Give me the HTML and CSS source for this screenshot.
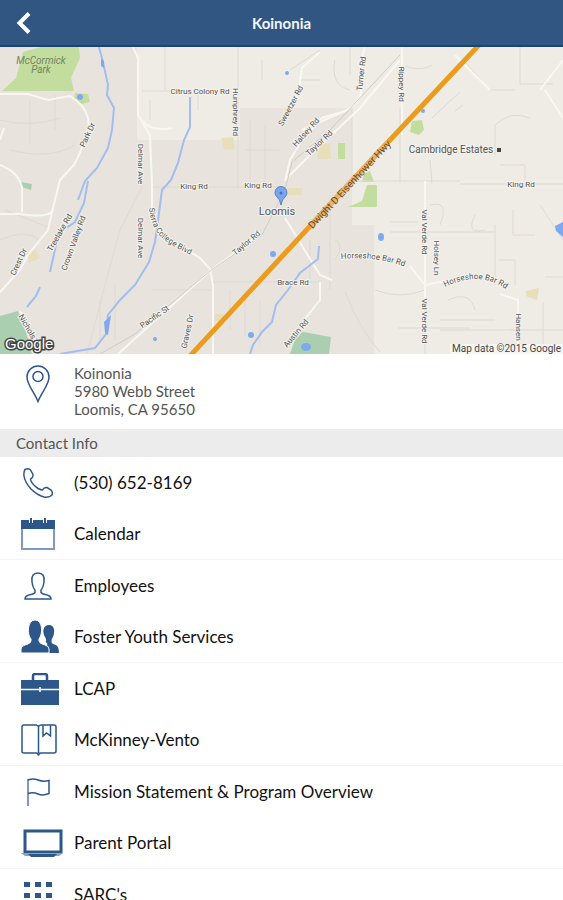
FILE: index.html
```
<!DOCTYPE html>
<html lang="en">
<head>
    <meta charset="UTF-8">
    <meta name="viewport" content="width=device-width, initial-scale=1.0">
    <title>Koinonia</title>
    <link rel="stylesheet" href="styles.css">
</head>
<body>

    <header class="topbar">
        <button class="back" aria-label="Back">
            <svg width="16" height="24" viewBox="0 0 16 24"><path d="M13 2.500 L3.500 12 L13 21.500" fill="none" stroke="#fff" stroke-width="4"/></svg>
        </button>
        <h1>Koinonia</h1>
    </header>

    <main>
        <div class="map">
            <svg viewBox="0 47 563 307" preserveAspectRatio="xMidYMid slice">
                <!-- land -->
                <rect x="0" y="47" width="563" height="307" fill="#efece5"/>
                <path d="M0 47H137V140H240V108H352V225H374V354H0Z" fill="#e8e4dd"/>
                <path d="M137 47H285V108H240V140H152L140 120Z" fill="#efece5"/>

                <!-- parks, schools -->
                <g fill="#c3dd9f">
                    <path d="M23 52L41 47H79L80 58L71 78L74 91H2L16 78Z"/>
                    <path d="M75 93L88 94L90 102L82 104L74 99Z"/>
                    <path d="M412 121L422 120L424 130L419 135L410 132Z"/>
                    <rect x="338" y="143" width="7" height="16"/>
                    <path d="M364 174L370 171L374 182L362 182Z"/>
                    <path d="M367 185H377V207H348L362 201Z"/>
                </g>
                <g fill="#a9cfb0">
                    <path d="M0 316L18 311L24 325L32 354H0Z"/>
                    <path d="M298 331L331 337L329 354H290Z"/>
                    <path d="M21 182L32 184L31 190L21 187Z"/>
                </g>
                <g fill="#e8dfba">
                    <path d="M221 138L233 137L235 149L224 150Z"/>
                    <path d="M319 144L330 143L331 159L317 159Z"/>
                    <path d="M27 252L36 250L40 258L29 263Z"/>
                    <path d="M288 188H302V195H288Z"/>
                    <path d="M526 291L539 288L537 300L526 296Z"/>
                    <path d="M215 314H223V321H215Z"/>
                </g>

                <!-- minor roads -->
                <g class="lane">
                    <path d="M165 47V90M142 91H170M238 47V188M352 108V180M350 47V75M520 47V84M520 84H553M400 108V183"/>
                    <path d="M152 187H280M345 181H460M460 184H563M425 181V354M213 282H320M152 290H213M495 225V285M390 232H495M390 222H418"/>
                    <path d="M142 187L120 230L105 285L87 354M100 300V340M115 285V340M230 290V330M245 290V335M260 300V345"/>
                    <path d="M455 111L463 105M432 118L460 92M465 62L490 90H515M495 155V125Q510 110 530 118M430 160L432 183M500 165H525V180"/>
                    <path d="M430 205Q450 200 440 225M475 215Q465 235 485 230M513 210V235H535M498 260H515V285M448 300Q470 290 475 310M440 320H495M440 330H520M398 328H470"/>
                    <path d="M290 70L320 50M335 60Q330 85 350 90M405 66Q420 72 432 65M300 90V80H320M543 302V354M545 277H563M510 330H563M540 205L563 240"/>
                    <path d="M5 210Q30 220 50 228M0 240Q25 228 40 240M0 120Q30 128 60 118M10 150Q50 160 75 145M55 95V130M30 100V145M150 100V120M198 90V110M262 60V80"/>
                    <path d="M250 120V180M265 125V180M245 150H280M310 240V280M330 210V290M335 240Q345 245 335 260M345 292Q360 330 380 352M375 290Q400 300 425 290"/>
                </g>
                <g class="road">
                    <path d="M0 140L4 128M0 94H28L48 100L70 96Q85 105 88 118L89 128Q82 150 74 165L60 180L52 212Q45 218 20 214H0"/>
                    <path d="M52 212L48 230L28 255L20 270L0 292M0 165Q18 172 22 187L22 212M20 311L35 340L50 350"/>
                    <path d="M133 47L138 58V115L150 135L152 185V215Q155 235 175 243L200 258L210 269L213 285V354"/>
                    <path d="M142 120Q148 130 165 129L172 128M118 354L210 271L255 238M285 181L290 160L302 140L322 118L345 111M285 180L310 155L360 108L400 60"/>
                    <path d="M402 47V135M425 181V300M285 218L320 275L332 280M320 282V300L300 325M410 266L425 285L450 280M500 294L518 300V354"/>
                    <path d="M365 47Q358 70 360 85Q365 100 345 111L302 130M320 52L302 68L298 95L282 122M455 55L490 90M540 90L563 60M545 90L563 118"/>
                </g>
                <path d="M100 354L135 334L210 271L262 235L285 190L292 162L330 130L400 55" fill="none" stroke="#cfcbc5" stroke-width="1"/>

                <!-- water -->
                <g class="creek">
                    <path d="M99 47L103 62L108 85L107 95L114 108L112 130L108 148L97 168L85 181L78 200M88 181L84 203L75 222L60 232L56 245L50 272"/>
                    <path d="M190 97V127L184 140L178 163L171 180L162 190L157 228L155 242L149 262L135 285L120 300L108 315L106 334L95 348L60 354"/>
                    <path d="M40 287L36 296L27 307M319 246L318 259L300 273L288 290L276 305L272 322L262 332L253 345L250 354"/>
                </g>
                <g fill="#7fa9ee">
                    <path d="M104 322L111 315L108 335L105 333Z"/>
                    <path d="M555 226L563 222V237L556 231Z"/>
                    <ellipse cx="381" cy="237" rx="3" ry="4"/>
                    <circle cx="273" cy="254" r="3"/>
                    <circle cx="251" cy="335" r="3"/>
                    <circle cx="80" cy="97" r="3"/>
                    <circle cx="287" cy="73" r="2"/>
                    <circle cx="423" cy="111" r="2"/>
                    <circle cx="155" cy="339" r="2"/>
                    <ellipse cx="306" cy="347" rx="5" ry="4"/>
                    <path d="M101 59L104 61L104 68L101 66Z"/>
                </g>

                <!-- freeway -->
                <path d="M190 356L337 197L390 140L479 45" fill="none" stroke="#eb9c1d" stroke-width="5"/>
                <path d="M310 227L337 197L388 142" fill="none" stroke="#e8b26a" stroke-width="5"/>

                <!-- labels -->
                <defs>
                    <path id="sierra" d="M149 208Q152 232 166 241Q180 251 205 261"/>
                    <path id="horseshoe1" d="M341 259Q385 255 418 273"/>
                    <path id="horseshoe2" d="M445 287Q487 266 518 300"/>
                </defs>
                <g class="label">
                    <g class="park"><text x="41" y="64">McCormick</text><text x="41" y="73">Park</text></g>
                    <text x="200" y="94">Citrus Colony Rd</text>
                    <text transform="translate(233 112) rotate(90)">Humphrey Rd</text>
                    <text transform="translate(90 136) rotate(-65)">Park Dr</text>
                    <text transform="translate(138 164) rotate(90)">Delmar Ave</text>
                    <text transform="translate(138 238) rotate(90)">Delmar Ave</text>
                    <text x="194" y="189">King Rd</text>
                    <text x="258" y="188">King Rd</text>
                    <text x="521" y="187">King Rd</text>
                    <text transform="translate(62 234) rotate(-60)">Treelake Rd</text>
                    <text transform="translate(76 244) rotate(-70)">Crown Valley Rd</text>
                    <text transform="translate(21 263) rotate(-65)">Crest Dr</text>
                    <text transform="translate(248 245) rotate(-40)">Taylor Rd</text>
                    <text transform="translate(156 319) rotate(-35)">Pacific St</text>
                    <text transform="translate(190 332) rotate(-78)">Graves Dr</text>
                    <text transform="translate(298 335) rotate(-50)">Austin Rd</text>
                    <text transform="translate(25 328) rotate(60)">Nichols</text>
                    <text x="293" y="285">Brace Rd</text>
                    <text transform="translate(293 107) rotate(-62)">Sweetzer Rd</text>
                    <text transform="translate(308 134) rotate(-48)">Halsey Rd</text>
                    <text transform="translate(321 145) rotate(-43)">Taylor Rd</text>
                    <text transform="translate(364 74) rotate(-83)">Turner Rd</text>
                    <text transform="translate(399 84) rotate(90)">Rippey Rd</text>
                    <text transform="translate(422 232) rotate(90)">Val Verde Rd</text>
                    <text transform="translate(422 321) rotate(90)">Val Verde Rd</text>
                    <text transform="translate(434 258) rotate(90)">Holsey Ln</text>
                    <text transform="translate(516 327) rotate(90)">Hansen</text>
                    <text class="curved"><textPath href="#sierra">Sierra College Blvd</textPath></text>
                    <text class="curved"><textPath href="#horseshoe1">Horseshoe Bar Rd</textPath></text>
                    <text class="curved"><textPath href="#horseshoe2">Horseshoe Bar Rd</textPath></text>
                    <text class="hwy" transform="translate(352 187) rotate(-47)">Dwight D Eisenhower Hwy</text>
                    <text class="place" x="451" y="153">Cambridge Estates</text>
                    <text class="town" x="277" y="215">Loomis</text>
                </g>
                <rect x="497" y="148" width="4" height="4" fill="#444"/>

                <!-- pin -->
                <path d="M281 205Q280 199 277 197A6 6 0 1 1 285 197Q282 199 281 205Z" fill="#78a5ec" stroke="#5b83bd" stroke-width="1"/>
                <circle cx="281" cy="193" r="1.500" fill="#4a70a8"/>
            </svg>
            <span class="google">Google</span>
            <span class="credit">Map data ©2015 Google</span>
        </div>

        <div class="address">
            <span class="icon">
                <svg width="24" height="38" viewBox="0 0 24 38" class="line"><path d="M12 36.500C9 28 1 20 1 12A11 11 0 0 1 23 12C23 20 15 28 12 36.500Z"/><circle cx="12" cy="11.500" r="5"/></svg>
            </span>
            <address>Koinonia<br>5980 Webb Street<br>Loomis, CA 95650</address>
        </div>

        <h2>Contact Info</h2>

        <ul class="links">
            <li><a href="tel:5306528169">
                <span class="icon"><svg width="30" height="30" viewBox="0 0 30 30" class="line"><path d="M2 1.500Q5 0 7.500 2L10 6.500Q10.500 9 7.500 11Q8 15 12.500 18.500Q16 22 19.500 22Q21 19 24 19.500L28 22Q30 24 29 27Q26 30 21 29Q14 27 8 21Q2 14.500 1 8Q0.500 4 2 1.500Z"/></svg></span>
                (530) 652-8169
            </a></li>
            <li><a href="#calendar">
                <span class="icon"><svg width="34" height="32" viewBox="0 0 34 32"><rect x="1" y="3" width="32" height="28" fill="#fff" stroke="#7f9abb" stroke-width="2"/><path d="M0 2H34V11H0Z" fill="#2d5788"/><path d="M10 0V5M24 0V5" stroke="#fff" stroke-width="4"/><path d="M10 0V6M24 0V6" stroke="#2d5788" stroke-width="2"/></svg></span>
                Calendar
            </a></li>
            <li><a href="#employees">
                <span class="icon"><svg width="28" height="28" viewBox="0 0 28 28" class="line"><path d="M11 18C9 16 8.500 13 8 10C7 4 9.500 1 14 1C18.500 1 21 4 20 10C19.500 13 19 16 17 18V20.500Q18 22 21 22.500Q27 23.500 27 27H1Q1 23.500 7 22.500Q10 22 11 20.500Z"/></svg></span>
                Employees
            </a></li>
            <li><a href="#foster-youth">
                <span class="icon wide"><svg width="38" height="34" viewBox="0 0 38 34" fill="#2d5788"><path d="M23 33V30Q29 25 24.500 21.500Q26 20 24 17C21 12 22 5 28 5C34 5 34 12 32 17Q30 19 30.500 22Q31 24 35 25Q38 27 38 33Z"/><path d="M0 33V29Q0 26 4 25Q10 23.500 10 21V19C6 15 6 0 14 0C22 0 22 14 18 19V21Q18 23.500 24 25Q28 26 28 29V33Z" stroke="#fff" stroke-width="1"/></svg></span>
                Foster Youth Services
            </a></li>
            <li><a href="#lcap">
                <span class="icon wide"><svg width="38" height="32" viewBox="0 0 38 32"><path d="M12 7V3Q12 1 14 1H24Q26 1 26 3V7" fill="none" stroke="#2d5788" stroke-width="2.500"/><path d="M0 7H38V32H0Z" fill="#2d5788"/><path d="M0 16.500H38M19 14V19" stroke="#fff" stroke-width="1.500"/></svg></span>
                LCAP
            </a></li>
            <li><a href="#mckinney-vento">
                <span class="icon wide"><svg width="36" height="32" viewBox="0 0 36 32" class="line"><path d="M16 1H3Q1 1 1 3V27Q1 29 3 29H15Q17 29 17.500 31.500Q18 29 20 29H33Q35 29 35 27V3Q35 1 33 1H20Q18 1 17.500 3Q17 1 15 1M17.500 2V29M22 1V12L25.500 9L29.500 12V1"/></svg></span>
                McKinney-Vento
            </a></li>
            <li><a href="#mission">
                <span class="icon"><svg width="24" height="28" viewBox="0 0 24 28" class="line"><path d="M2 1V28" stroke="#7f9abb" stroke-width="2"/><path d="M2 2Q7 0 12 2Q17 4 23 2.500V15.500Q17 18 12 16Q7 14 2 15.500"/></svg></span>
                Mission Statement &amp; Program Overview
            </a></li>
            <li><a href="#portal">
                <span class="icon wide"><svg width="42" height="28" viewBox="0 0 42 28"><rect x="4" y="2" width="36" height="21" fill="#fff" stroke="#2d5788" stroke-width="3"/><path d="M0 24H42L38 27H4Z" fill="#8aa2c0"/><path d="M7 25H36L33 28H10Z" fill="#2d5788"/></svg></span>
                Parent Portal
            </a></li>
            <li><a href="#sarcs">
                <span class="icon"><svg width="28" height="26" viewBox="0 0 28 26" fill="#2d5788"><path d="M0 0H6V5H0ZM11 0H17V5H11ZM22 0H28V5H22ZM0 11H6V16H0ZM11 11H17V16H11ZM22 11H28V16H22ZM0 21H6V26H0ZM11 21H17V26H11ZM22 21H28V26H22Z"/></svg></span>
                SARC's
            </a></li>
        </ul>
    </main>

</body>
</html>
```
FILE: styles.css
```
* {
    box-sizing: border-box;
}
body {
    margin: 0;
    height: 100vh;
    display: flex;
    flex-direction: column;
    background-color: #fff;
    color: #111;
    font-family: Lato, sans-serif;
}
.topbar {
    flex: none;
    height: 47px;
    display: grid;
    grid-template-columns: 48px 1fr 48px;
    align-items: center;
    background-color: #305681;
    border-bottom: 2px solid #174676;
}
.topbar h1 {
    margin: 0;
    font-size: 15px;
    font-weight: bold;
    line-height: 20px;
    color: #f2f5f9;
    text-align: center;
}
.back {
    display: flex;
    justify-content: center;
    padding: 0;
    border: none;
    background: none;
    cursor: pointer;
}
main {
    flex: 1;
    min-height: 0;
    overflow-y: auto;
    scrollbar-width: none;
}
.map {
    position: relative;
    height: 307px;
}
.map svg {
    display: block;
    width: 100%;
    height: 100%;
}
.lane {
    fill: none;
    stroke: #dedad3;
    stroke-width: 1;
}
.road {
    fill: none;
    stroke: #f8f7f3;
    stroke-width: 2;
}
.creek {
    fill: none;
    stroke: #a3bdf0;
    stroke-width: 2;
}
.label {
    font-family: Roboto, sans-serif;
    font-size: 8px;
    text-anchor: middle;
    fill: #555;
    stroke: #f4f2ed;
    stroke-width: 2px;
    paint-order: stroke;
}
.label .curved {
    text-anchor: start;
}
.label .park {
    font-size: 10px;
    font-style: italic;
    fill: #6f8560;
    stroke: none;
}
.label .hwy {
    font-size: 10px;
    fill: #6b4a1c;
    stroke: none;
}
.label .place {
    font-size: 10px;
}
.label .town {
    font-size: 11px;
}
.google {
    position: absolute;
    left: 5px;
    bottom: 0;
    font-family: "Liberation Sans", sans-serif;
    font-size: 15px;
    line-height: 20px;
    color: #fff;
    -webkit-text-stroke: 3px #444;
    paint-order: stroke fill;
}
.credit {
    position: absolute;
    right: 0;
    bottom: 0;
    padding: 0 2px;
    background-color: #f7f6f3;
    font-family: Roboto, sans-serif;
    font-size: 10px;
    line-height: 10px;
    color: #444;
}
.icon {
    flex: none;
    width: 44px;
    display: flex;
    justify-content: center;
}
.icon svg {
    flex: none;
}
.icon.wide {
    justify-content: flex-start;
    padding-left: 5px;
}
.line {
    fill: none;
    stroke: #2d5788;
    stroke-width: 1.5;
}
.address {
    display: flex;
    gap: 14px;
    height: 75px;
    padding: 10px 16px;
}
.address .icon {
    padding-top: 1px;
}
.address address {
    font-size: 15px;
    font-style: normal;
    line-height: 18px;
    color: #555;
}
h2 {
    margin: 0;
    padding: 0 16px;
    background-color: #ececec;
    font-size: 15px;
    font-weight: normal;
    line-height: 28px;
    color: #555;
}
.links {
    margin: 0;
    padding: 0;
    list-style: none;
}
.links li:nth-child(even) {
    border-bottom: 1px solid #f4f4f4;
}
.links a {
    display: flex;
    align-items: center;
    gap: 14px;
    height: 51px;
    padding: 0 16px;
    font-size: 17px;
    color: #111;
    text-decoration: none;
}
```
